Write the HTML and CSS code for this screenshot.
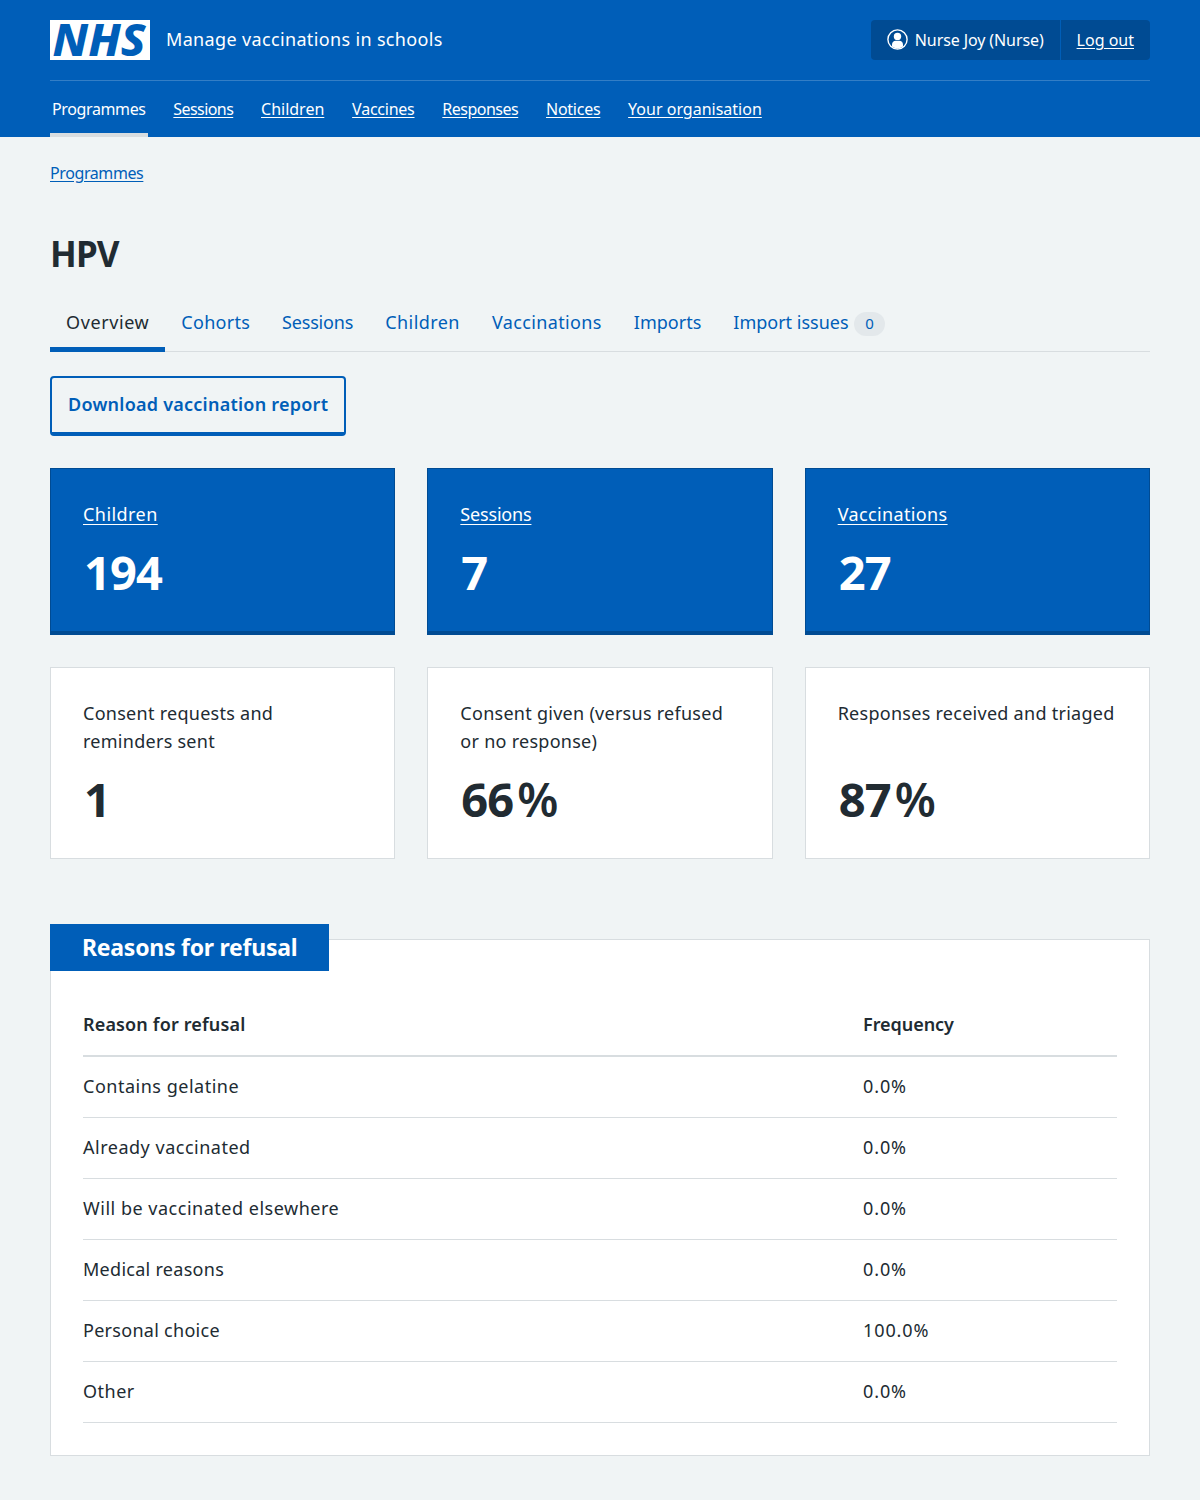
FILE: index.html
```html
<!DOCTYPE html>
<html lang="en">
<head>
<meta charset="utf-8">
<title>HPV – Manage vaccinations in schools</title>
<link rel="stylesheet" href="styles.css">
</head>
<body>
<header class="header">
  <div class="container">
    <div class="header-top">
      <svg class="logo" viewBox="0 0 100 40" role="img" aria-label="NHS">
        <rect width="100" height="40" fill="#fff"/>
        <text class="logo-text" x="2.6" y="36.2" textLength="93" lengthAdjust="spacingAndGlyphs">NHS</text>
      </svg>
      <span class="service">Manage vaccinations in schools</span>
      <div class="account">
        <div class="account-item account-user">
          <svg class="account-icon" viewBox="0 0 21 21" aria-hidden="true">
            <circle cx="10.5" cy="10.5" r="9.6" fill="none" stroke="#fff" stroke-width="1.4"/>
            <circle cx="10.5" cy="7.4" r="3.7" fill="#fff"/>
            <path d="M5 17.6v-2c0-2.2 1.7-3.8 3.8-3.8h3.4c2.1 0 3.8 1.6 3.8 3.8v2a9 9 0 0 1-11 0z" fill="#fff"/>
          </svg>
          <span>Nurse Joy (Nurse)</span>
        </div>
        <div class="account-item"><a href="#">Log out</a></div>
      </div>
    </div>
    <nav class="nav">
      <a class="nav-link nav-current" href="#">Programmes</a>
      <a class="nav-link nav-sessions" href="#">Sessions</a>
      <a class="nav-link" href="#">Children</a>
      <a class="nav-link nav-vaccines" href="#">Vaccines</a>
      <a class="nav-link nav-responses" href="#">Responses</a>
      <a class="nav-link nav-notices" href="#">Notices</a>
      <a class="nav-link" href="#">Your organisation</a>
    </nav>
  </div>
</header>
<main class="container">
  <div class="breadcrumb"><a href="#">Programmes</a></div>
  <h1 class="title">HPV</h1>
  <nav class="tabs">
    <a class="tab tab-current" href="#">Overview</a>
    <a class="tab tab-cohorts" href="#">Cohorts</a>
    <a class="tab label-sessions" href="#">Sessions</a>
    <a class="tab label-children" href="#">Children</a>
    <a class="tab label-vaccinations" href="#">Vaccinations</a>
    <a class="tab" href="#">Imports</a>
    <a class="tab tab-issues" href="#">Import issues<span class="count">0</span></a>
  </nav>
  <a class="button" href="#">Download vaccination report</a>
  <div class="cards">
    <div class="card card-link">
      <div class="card-label"><a class="label-children" href="#">Children</a></div>
      <div class="card-value">194</div>
    </div>
    <div class="card card-link">
      <div class="card-label"><a class="label-sessions" href="#">Sessions</a></div>
      <div class="card-value">7</div>
    </div>
    <div class="card card-link">
      <div class="card-label"><a class="label-vaccinations" href="#">Vaccinations</a></div>
      <div class="card-value">27</div>
    </div>
    <div class="card">
      <div class="card-label">Consent requests and<br>reminders sent</div>
      <div class="card-value">1</div>
    </div>
    <div class="card">
      <div class="card-label">Consent given (versus refused<br>or no response)</div>
      <div class="card-value">66<span class="percent">%</span></div>
    </div>
    <div class="card">
      <div class="card-label">Responses received and triaged</div>
      <div class="card-value">87<span class="percent">%</span></div>
    </div>
  </div>
  <section class="panel">
    <h2 class="panel-title">Reasons for refusal</h2>
    <table class="table">
      <thead><tr><th class="reason">Reason for refusal</th><th class="frequency">Frequency</th></tr></thead>
      <tbody>
        <tr><td>Contains gelatine</td><td class="figure">0.0%</td></tr>
        <tr><td>Already vaccinated</td><td class="figure">0.0%</td></tr>
        <tr><td>Will be vaccinated elsewhere</td><td class="figure">0.0%</td></tr>
        <tr><td class="snug">Medical reasons</td><td class="figure">0.0%</td></tr>
        <tr><td class="snug">Personal choice</td><td class="figure">100.0%</td></tr>
        <tr><td>Other</td><td class="figure">0.0%</td></tr>
      </tbody>
    </table>
  </section>
</main>
</body>
</html>
```
FILE: styles.css
```css
* { box-sizing: border-box; }

body {
  margin: 0;
  background: #f0f4f5;
  color: #212b32;
  font-family: "Noto Sans", sans-serif;
  font-size: 18px;
  line-height: 28px;
}

a { color: #005eb8; }

.container { width: 1100px; margin: 0 auto; }

/* Header */
.header { height: 137px; background: #005eb8; color: #fff; font-size: 16px; line-height: 24px; }
.header a { color: #fff; text-underline-offset: 2px; }
.header-top { display: flex; align-items: center; height: 81px; padding-bottom: 1px; border-bottom: 1px solid #337ec6; }
.logo { width: 100px; height: 40px; overflow: visible; }
.logo-text { font-family: "Noto Sans", sans-serif; font-size: 45px; font-weight: 800; font-style: italic; fill: #005eb8; }
.service { margin: -1px 0 0 16px; font-size: 18px; letter-spacing: 0.35px; }

.account { display: flex; height: 40px; margin-left: auto; border-radius: 4px; background: #004b93; }
.account-item { display: flex; align-items: center; padding: 0 16px; }
.account-item + .account-item { border-left: 1px solid #005eb8; }
.account-user { letter-spacing: -0.1px; }
.account-icon { width: 21px; height: 21px; margin: 0 7px 1px 0; }

.nav { display: flex; gap: 23.8px; }
.nav-link { height: 56px; padding: 16px 2px 0; }
.nav-current { border-bottom: 4px solid #d8dde0; text-decoration: none; letter-spacing: -0.38px; }
.nav-sessions { letter-spacing: -0.58px; }
.nav-vaccines { letter-spacing: -0.24px; }
.nav-responses { letter-spacing: -0.5px; }
.nav-notices { letter-spacing: -0.26px; }

/* Page heading and tabs */
.breadcrumb { padding-top: 24px; font-size: 16px; line-height: 24px; letter-spacing: -0.4px; }
.breadcrumb a { text-underline-offset: 2px; }
.title { margin: 47px 0 0; font-size: 35px; line-height: 44px; font-weight: 700; letter-spacing: -0.9px; }

.tabs { display: flex; height: 58px; margin-top: 18px; border-bottom: 1px solid #d8dde0; }
.tab { height: 58px; padding: 14px 16px 0; text-decoration: none; }
.tab-current { border-bottom: 5px solid #005eb8; color: #212b32; letter-spacing: 0.6px; }
.tab-cohorts { letter-spacing: 0.27px; }
.tab-issues { display: flex; align-items: flex-start; }
.label-sessions { letter-spacing: -0.18px; }
.label-children { letter-spacing: 0.44px; }
.label-vaccinations { letter-spacing: 0.37px; }
.count { width: 31px; height: 24px; margin: 4px 0 0 5.5px; border-radius: 12px; background: #e3e8eb; font-size: 15px; line-height: 23px; text-align: center; }

.button { display: inline-block; height: 60px; margin-top: 24px; padding: 12px 16px 0; border: 2px solid #005eb8; border-bottom-width: 4px; border-radius: 4px; text-decoration: none; font-weight: 600; letter-spacing: 0.24px; }

/* Summary cards */
.cards { display: grid; grid-template-columns: repeat(3, 1fr); grid-template-rows: 167px 192px; gap: 32px; margin-top: 32px; }
.card { display: flex; flex-direction: column; justify-content: space-between; padding: 31px 32px 29px; border: 1px solid #d8dde0; background: #fff; letter-spacing: 0.27px; }
.card-link { border-color: #004b93; border-bottom-width: 4px; background: #005eb8; color: #fff; }
.card-link a { color: #fff; text-underline-offset: 3px; }
.card-value { padding-left: 1px; font-size: 47px; line-height: 60px; font-weight: 700; letter-spacing: -0.9px; }
.percent { margin-left: 4px; font-weight: 600; }

/* Refusal table */
.panel { height: 517px; margin-top: 80px; padding: 0 32px; border: 1px solid #d8dde0; background: #fff; }
.panel-title { width: 279px; height: 47px; margin: -16px 0 0 -33px; padding-left: 32px; background: #005eb8; color: #fff; font-size: 23px; line-height: 47px; font-weight: 700; letter-spacing: -0.25px; }
.table { width: 100%; margin-top: 24px; border-collapse: separate; border-spacing: 0; table-layout: fixed; }
.table th { height: 62px; padding: 0 0 2px; border-bottom: 2px solid #d8dde0; text-align: left; font-weight: 600; letter-spacing: 0.15px; }
.table td { height: 61px; padding: 0 0 2px; border-bottom: 1px solid #d8dde0; letter-spacing: 0.51px; }
.reason { width: 780px; }
.table .frequency { letter-spacing: -0.05px; }
.table .snug { letter-spacing: 0.28px; }
.table .figure { letter-spacing: 0.9px; }
```
